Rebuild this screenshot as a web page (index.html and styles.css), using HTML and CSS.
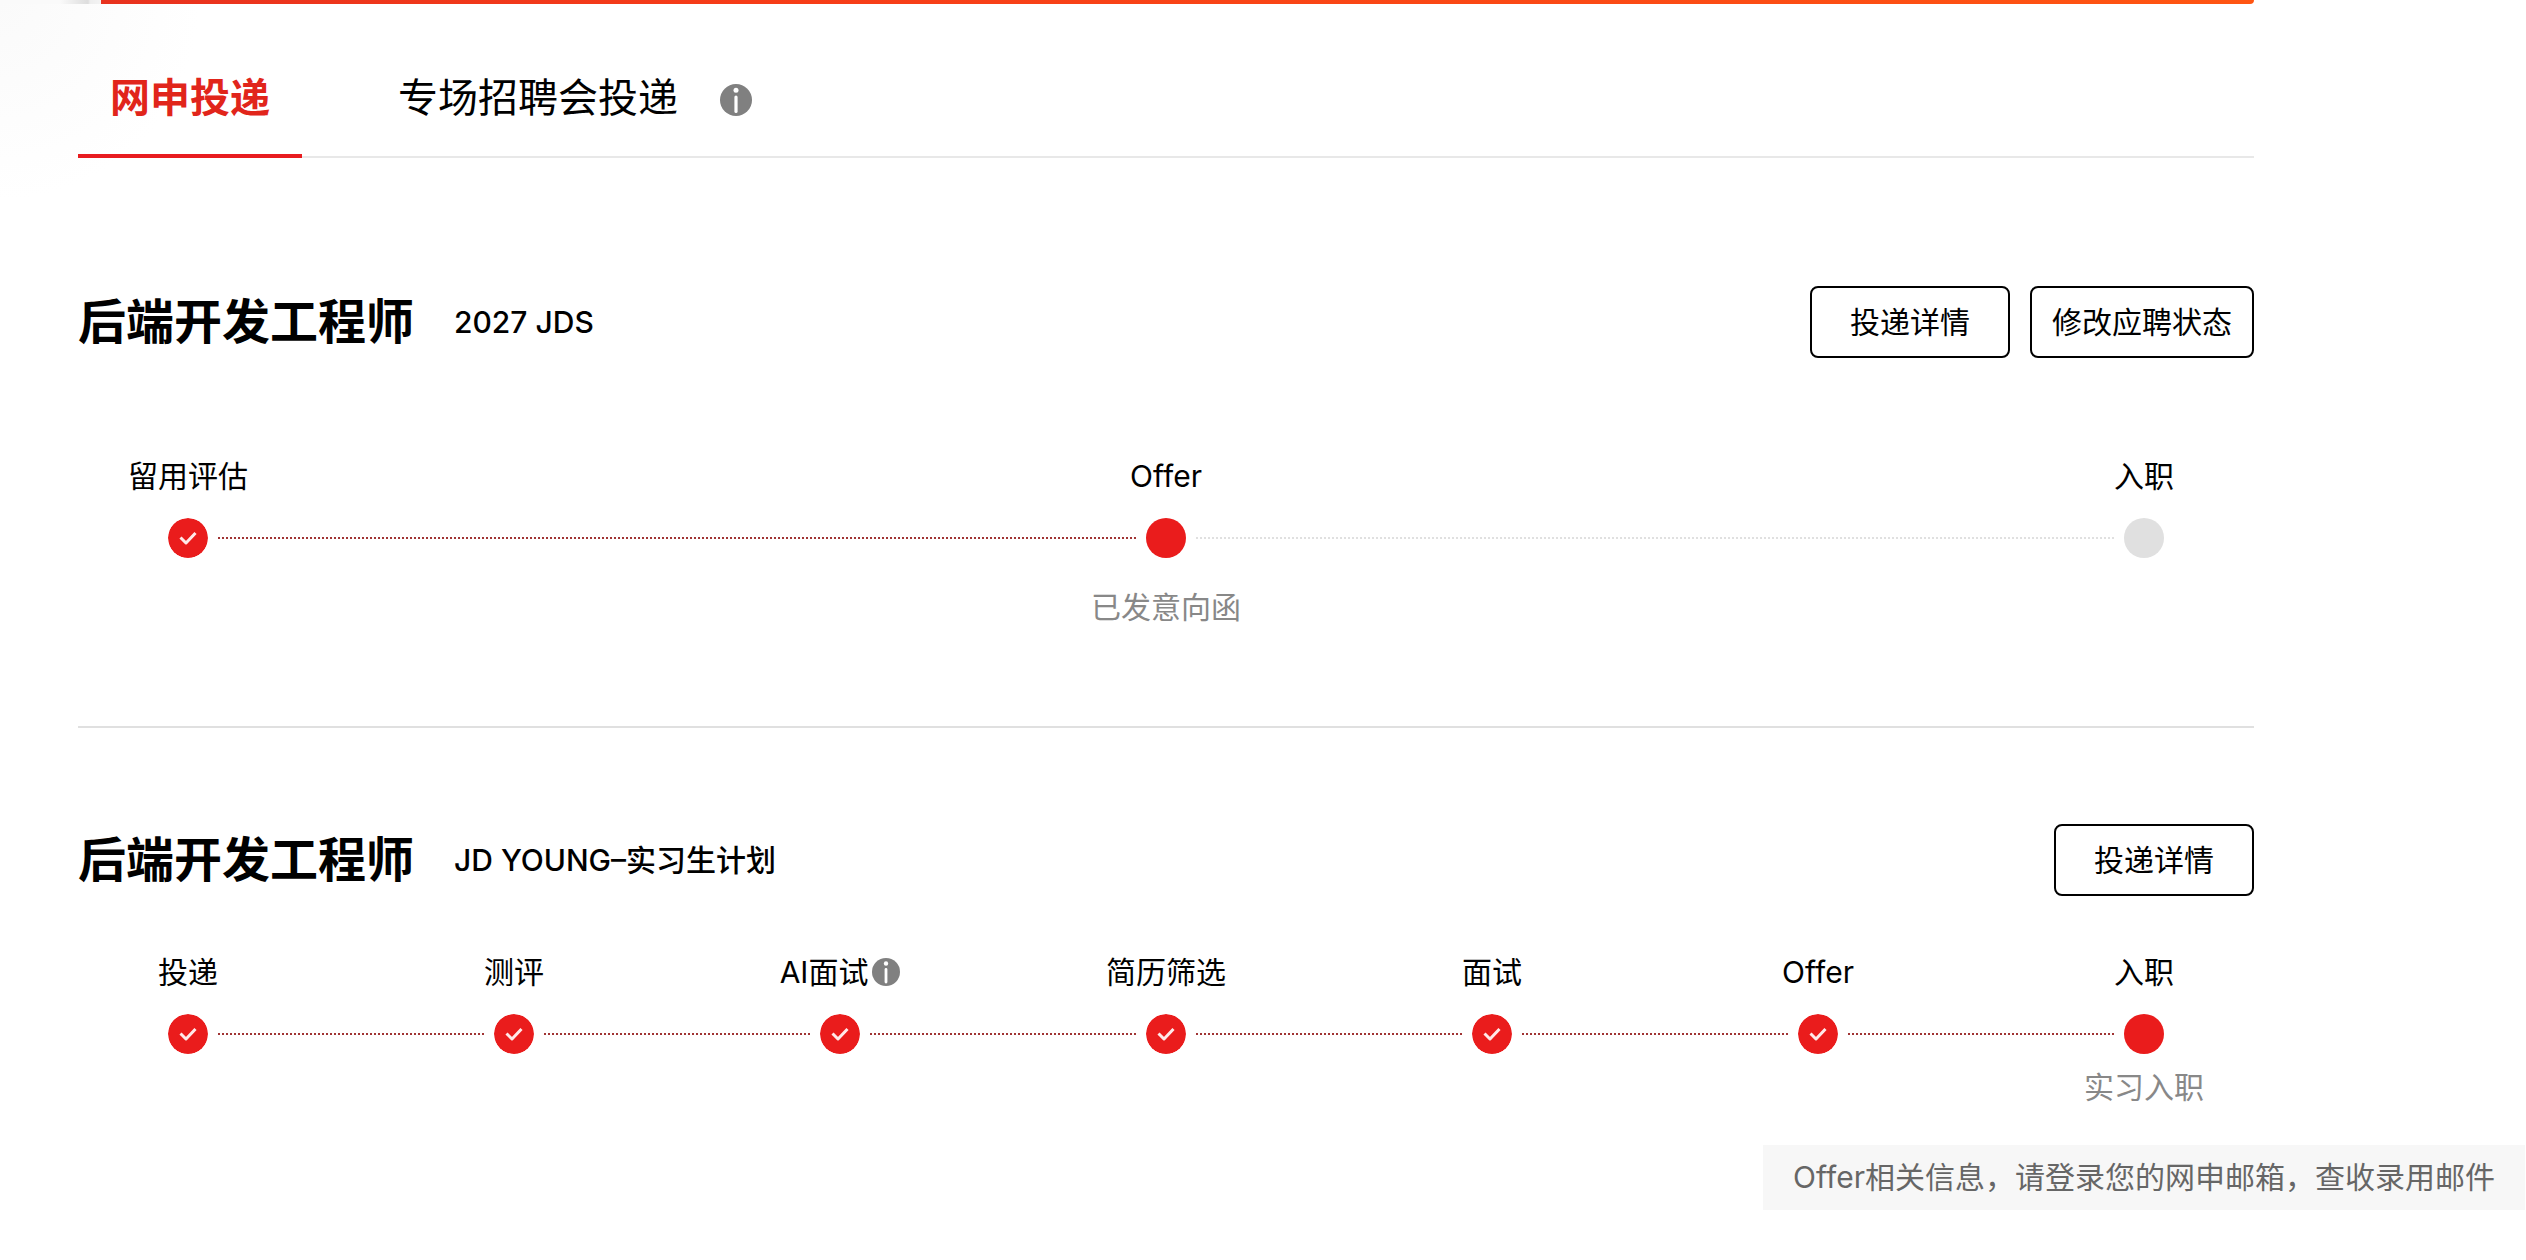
FILE: index.html
```html
<!DOCTYPE html>
<html lang="zh-CN">
<head>
<meta charset="utf-8">
<meta name="viewport" content="width=device-width, initial-scale=1">
<title>我的投递</title>
<link rel="stylesheet" href="styles.css">
</head>
<body>
<svg class="sprite" aria-hidden="true">
  <symbol id="check" viewBox="0 0 40 40">
    <circle cx="20" cy="20" r="20" fill="#ea1c1c"/>
    <path d="M12.500 19.500l5.500 5.500l9.500-10" fill="none" stroke="#ffe9e9" stroke-width="3" stroke-linejoin="round"/>
  </symbol>
  <symbol id="info" viewBox="0 0 32 32">
    <circle cx="16" cy="16" r="16" fill="#808080"/>
    <circle cx="16" cy="6.300" r="2.500" fill="#fff"/>
    <path d="M16 13v14.500" fill="none" stroke="#fff" stroke-width="3.200" stroke-linecap="round"/>
  </symbol>
</svg>
<div class="banner"><div class="banner-bar"></div></div>
<main class="page">
  <nav class="tabs">
    <a class="tab tab-active" href="#online">网申投递</a>
    <a class="tab" href="#fair">专场招聘会投递</a>
    <button class="tab-info" aria-label="说明"><svg class="icon-info"><use href="#info"/></svg></button>
  </nav>

  <section class="application">
    <header class="heading">
      <h2 class="job">后端开发工程师</h2>
      <span class="project">2027 JDS</span>
      <div class="actions">
        <button class="btn">投递详情</button>
        <button class="btn btn-wide">修改应聘状态</button>
      </div>
    </header>
    <ol class="steps steps-spaced">
      <li class="step"><span class="label">留用评估</span><svg class="dot"><use href="#check"/></svg></li>
      <li class="step step-next-todo"><span class="label">Offer</span><span class="dot dot-current"></span><span class="status">已发意向函</span></li>
      <li class="step"><span class="label">入职</span><span class="dot dot-todo"></span></li>
    </ol>
  </section>

  <section class="application">
    <header class="heading">
      <h2 class="job">后端开发工程师</h2>
      <span class="project">JD YOUNG–实习生计划</span>
      <div class="actions">
        <button class="btn">投递详情</button>
      </div>
    </header>
    <ol class="steps">
      <li class="step"><span class="label">投递</span><svg class="dot"><use href="#check"/></svg></li>
      <li class="step"><span class="label">测评</span><svg class="dot"><use href="#check"/></svg></li>
      <li class="step"><span class="label">AI面试<svg class="icon-info icon-info-small"><use href="#info"/></svg></span><svg class="dot"><use href="#check"/></svg></li>
      <li class="step"><span class="label">简历筛选</span><svg class="dot"><use href="#check"/></svg></li>
      <li class="step"><span class="label">面试</span><svg class="dot"><use href="#check"/></svg></li>
      <li class="step"><span class="label">Offer</span><svg class="dot"><use href="#check"/></svg></li>
      <li class="step"><span class="label">入职</span><span class="dot dot-current"></span><span class="status">实习入职</span></li>
    </ol>
  </section>
</main>
<p class="notice">Offer相关信息，请登录您的网申邮箱，查收录用邮件</p>
</body>
</html>
```
FILE: styles.css
```css
* { box-sizing: border-box; }

body {
  margin: 0;
  display: flex;
  flex-direction: column;
  background: radial-gradient(circle at 0 0, #fafafa, #fff 200px);
  color: #000;
  font: 30px/40px Inter, "Noto Sans CJK SC", sans-serif;
}

.sprite { position: absolute; width: 0; height: 0; }

.banner {
  padding: 0 272px 0 78px;
  background: linear-gradient(90deg, #fafafa 60px, #ddd 88px, #eee 90px, #f4f4f4 102px) no-repeat 0 0 / 102px 6px;
}
.banner-bar {
  height: 4px;
  margin-left: 23px;
  background: linear-gradient(90deg, #e8321e, #f63c18 30%, #ff5512);
  border-radius: 0 0 4px 0;
}

.page { padding: 0 272px 0 78px; }

.tabs {
  display: flex;
  align-items: flex-start;
  height: 154px;
  padding-top: 64px;
  box-shadow: inset 0 -2px #e8e8e8;
}
.tab {
  height: 90px;
  padding: 0 32px;
  color: #000;
  font-size: 40px;
  line-height: 60px;
  text-decoration: none;
}
.tab + .tab { margin-left: 64px; }
.tab-active { color: #e1251b; font-weight: 700; border-bottom: 4px solid #e81c20; }
.tab-info { margin: 16px 0 0 10px; padding: 0; border: 0; background: none; }
.icon-info { display: block; width: 32px; height: 32px; }
.icon-info-small { width: 28px; height: 28px; margin-left: 4px; }

.application { padding: 96px 0 0; }
.application:first-of-type { padding: 128px 0 92px; border-bottom: 2px solid #e0e0e0; }

.heading { display: flex; align-items: center; }
.job { margin: 0; font-size: 48px; line-height: 72px; font-weight: 700; }
.project { margin-left: 40px; font-weight: 500; }
.actions { display: flex; gap: 20px; margin-left: auto; }
.btn {
  width: 200px;
  height: 72px;
  padding: 0;
  border: 2px solid #000;
  border-radius: 8px;
  background: #fff;
  color: #000;
  font: inherit;
}
.btn-wide { width: 224px; }

.steps {
  display: flex;
  margin: 0;
  padding: 56px 90px 0;
  list-style: none;
}
.step {
  flex: 1;
  display: grid;
  grid-template-columns: 40px 1fr;
  grid-template-rows: 40px 84px 22px;
  align-items: center;
}
.step:last-child { flex: none; }
.step::after {
  content: "";
  grid-area: 2 / 2;
  margin: 0 10px;
  border-top: 2px dotted #a03434;
}
.step:last-child::after { content: none; }
.step-next-todo::after { border-color: #e0e0e0; }
.steps-spaced { padding-top: 98px; }
.steps-spaced .step { grid-template-rows: 40px 84px 54px; }

.label, .status {
  grid-column: 1;
  justify-self: center;
  display: flex;
  align-items: center;
  white-space: nowrap;
}
.label { grid-row: 1; }
.status { grid-row: 3; color: #888; }
.dot { grid-area: 2 / 1; width: 40px; height: 40px; border-radius: 50%; }
.dot-current { background: #ea1c1c; }
.dot-todo { background: #e0e0e0; }

.notice {
  align-self: flex-end;
  margin: 47px 1px 50px 0;
  padding: 12px 30px 13px;
  background: #f7f7f7;
  color: #666;
}
```
